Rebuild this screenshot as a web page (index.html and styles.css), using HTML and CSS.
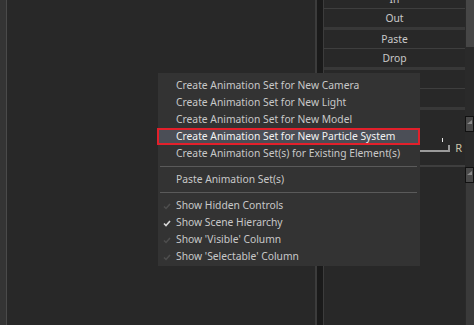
FILE: index.html
```html
<!DOCTYPE html>
<html lang="en">

<head>
  <meta charset="UTF-8" />
  <title>Animation Sets</title>
  <link rel="stylesheet" href="styles.css">
</head>

<body>
  <div class="edge"></div>
  <div class="view"></div>
  <div class="divider"></div>

  <div class="panel">
    <div class="list">
      <div class="btn">In</div>
      <div class="line"></div>
      <div class="btn">Out</div>
      <div class="band"></div>
      <div class="btn">Paste</div>
      <div class="line"></div>
      <div class="btn">Drop</div>
      <div class="band"></div>
      <div class="btn"></div>
      <div class="line"></div>
      <div class="btn"></div>
      <div class="band"></div>
    </div>
    <div class="slider">
      <div class="track"></div>
      <span class="axis">R</span>
    </div>
    <div class="rule"></div>
  </div>

  <div class="scroll">
    <div class="thumb"></div>
    <div class="gap"></div>
    <div class="box">
      <svg width="5" height="4" viewBox="0 0 5 4"><path d="M5 0 L5 4 L0 4 Z" fill="#8a8a8a" /></svg>
    </div>
    <div class="gap short"></div>
    <div class="box">
      <svg width="5" height="4" viewBox="0 0 5 4"><path d="M5 0 L5 4 L0 4 Z" fill="#8a8a8a" /></svg>
    </div>
    <div class="rest"></div>
  </div>

  <!-- context menu -->
  <div class="menu">
    <div class="item">Create Animation Set for New Camera</div>
    <div class="item">Create Animation Set for New Light</div>
    <div class="item">Create Animation Set for New Model</div>
    <div class="item active">Create Animation Set for New Particle System</div>
    <div class="item">Create Animation Set(s) for Existing Element(s)</div>
    <div class="sep"></div>
    <div class="item">Paste Animation Set(s)</div>
    <div class="sep"></div>
    <div class="item">
      <svg class="tick" width="8" height="7" viewBox="0 0 8 7"><path d="M1 3.5 L3 5.5 L7 1" fill="none" stroke="#4e4e4e" stroke-width="1.5" /></svg>
      Show Hidden Controls
    </div>
    <div class="item">
      <svg class="tick" width="8" height="7" viewBox="0 0 8 7"><path d="M1 3.5 L3 5.5 L7 1" fill="none" stroke="#d8d8d8" stroke-width="1.6" /></svg>
      Show Scene Hierarchy
    </div>
    <div class="item">
      <svg class="tick" width="8" height="7" viewBox="0 0 8 7"><path d="M1 3.5 L3 5.5 L7 1" fill="none" stroke="#4e4e4e" stroke-width="1.5" /></svg>
      Show 'Visible' Column
    </div>
    <div class="item">
      <svg class="tick" width="8" height="7" viewBox="0 0 8 7"><path d="M1 3.5 L3 5.5 L7 1" fill="none" stroke="#4e4e4e" stroke-width="1.5" /></svg>
      Show 'Selectable' Column
    </div>
  </div>
</body>

</html>
```

FILE: styles.css
```css
body {
  margin: 0;
  width: 474px;
  height: 325px;
  overflow: hidden;
  position: relative;
  display: flex;
  background-color: #282828;
  font-family: "Noto Sans", "Open Sans", sans-serif;
  font-size: 10.3px;
  color: #c8c8c8;
}

.edge {
  width: 6px;
  background-color: #343434;
  border-right: 1px solid #4a4a4a;
}

.view {
  width: 308px;
  background-color: #282828;
}

.divider {
  width: 6px;
  background-color: #1a1a1a;
  border-left: 2px solid #3c3c3c;
  border-right: 1px solid #3c3c3c;
}

.panel {
  width: 141px;
  display: flex;
  flex-direction: column;
  background-color: #282828;
}

.list {
  margin-top: -10px;
}

.btn {
  height: 18px;
  line-height: 18px;
  text-align: center;
}

.line {
  height: 1px;
  background-color: #3e3e3e;
}

.band {
  height: 3px;
  background-color: #383838;
}

.slider {
  height: 55px;
  display: flex;
  align-items: flex-end;
  gap: 5px;
  padding: 0 3px 12px 6px;
  box-sizing: border-box;
}

.track {
  flex: 1;
  height: 5px;
  margin-bottom: 1px;
  border-bottom: 2px solid #9a9a9a;
  border-right: 2px solid #9a9a9a;
  position: relative;
}

.track::after {
  content: "";
  position: absolute;
  right: 5px;
  top: -7px;
  width: 1px;
  height: 4px;
  background-color: #e8e8e8;
}

.axis {
  font-size: 11px;
  line-height: 11px;
  color: #cdc4a8;
}

.rule {
  height: 2px;
  background-color: #3e3e3e;
}

.scroll {
  width: 9px;
  display: flex;
  flex-direction: column;
  background-color: #2a2a2a;
}

.thumb {
  height: 47px;
  margin-left: 1px;
  background-color: #464646;
}

.gap {
  height: 69px;
}

.gap.short {
  height: 35px;
}

.box {
  height: 11px;
  border: 1px solid #111;
  background-color: #4a4a4a;
  display: flex;
  justify-content: flex-end;
  align-items: flex-start;
  padding: 3px 1px 0 0;
}

.rest {
  flex: 1;
  margin-left: 1px;
  background-color: #3a3a3a;
}

.menu {
  position: absolute;
  left: 158px;
  top: 73px;
  width: 262px;
  height: 193px;
  box-sizing: border-box;
  padding-top: 4px;
  background-color: #333333;
}

.item {
  height: 17px;
  line-height: 17px;
  padding-left: 18px;
  position: relative;
  white-space: nowrap;
}

.item.active {
  margin-left: -1px;
  padding-left: 19px;
  background-color: #4b4e56;
  color: #f2f2f2;
  outline: 2px solid #e3202b;
  outline-offset: -2px;
}

.tick {
  position: absolute;
  left: 5px;
  top: 6px;
}

.sep {
  height: 9px;
  display: flex;
  align-items: center;
  padding: 0 3px 0 2px;
}

.sep::before {
  content: "";
  flex: 1;
  height: 1px;
  background-color: #5a5a5a;
}
```
